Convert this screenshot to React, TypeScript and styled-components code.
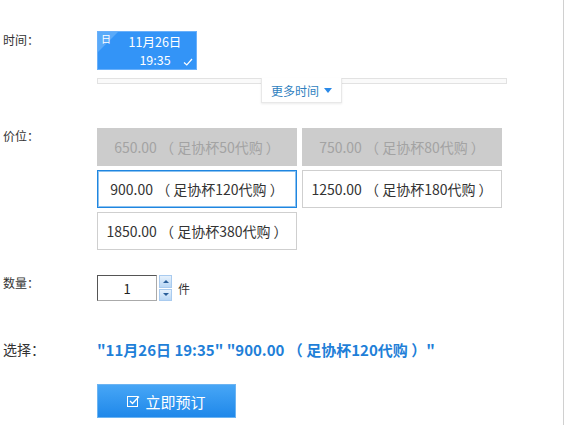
import React from "react";
import styled, { createGlobalStyle } from "styled-components";

const Global = createGlobalStyle`
  html, body { margin: 0; padding: 0; background: #fff; }
  body { font-family: "Noto Sans CJK SC", "Noto Sans", sans-serif; color: #333; }
`;

const Page = styled.div`
  width: 564px;
  height: 425px;
  border-right: 1px solid #d0d0d0;
  box-sizing: border-box;
  padding-top: 31px;
  display: flex;
  flex-direction: column;
`;

const Row = styled.div<{ $mt?: number }>`
  display: grid;
  grid-template-columns: 97px 1fr;
  margin-top: ${(p) => p.$mt ?? 0}px;
`;

const Label = styled.div<{ $size?: number; $top?: number }>`
  padding-left: 3px;
  font-size: ${(p) => p.$size ?? 12}px;
  line-height: 16px;
  padding-top: ${(p) => p.$top ?? 0}px;
  color: #333;
`;

const Col = styled.div`
  display: flex;
  flex-direction: column;
`;

const DateCard = styled.div`
  position: relative;
  width: 100px;
  height: 39px;
  background: #3394f7;
  border: 1px solid #6ab0fa;
  box-sizing: border-box;
  color: #fff;
  display: flex;
  flex-direction: column;
  align-items: center;
  justify-content: center;
  padding-left: 16px;
  font-size: 12.5px;
  line-height: 18px;
  overflow: hidden;
`;

const Corner = styled.div`
  position: absolute;
  left: 0;
  top: 0;
  width: 0;
  height: 0;
  border-top: 20px solid #5aaaf9;
  border-right: 20px solid transparent;
`;

const CornerText = styled.span`
  position: absolute;
  left: 3px;
  top: 1px;
  font-size: 10px;
  line-height: 12px;
`;

const Check = styled.svg`
  position: absolute;
  right: 3px;
  bottom: 3px;
`;

const MoreBar = styled.div`
  position: relative;
  width: 410px;
  height: 26px;
  margin-top: 8px;
`;

const Track = styled.div`
  height: 4px;
  border: 1px solid #e2e2e2;
  background: #fafafa;
`;

const MoreTab = styled.div`
  position: absolute;
  left: 164px;
  top: 0;
  width: 81px;
  height: 25px;
  background: #fff;
  border: 1px solid #e8e8e8;
  border-top: none;
  box-sizing: border-box;
  box-shadow: 0 1px 2px rgba(0, 0, 0, 0.08);
  font-size: 12px;
  color: #2f7fc0;
  display: flex;
  align-items: center;
  justify-content: center;
  gap: 5px;
`;

const Caret = styled.span`
  width: 0;
  height: 0;
  border-left: 4px solid transparent;
  border-right: 4px solid transparent;
  border-top: 5px solid #2b8ae8;
`;

const PriceGrid = styled.div`
  display: grid;
  grid-template-columns: 200px 200px;
  column-gap: 5px;
  row-gap: 4px;
`;

type Kind = "disabled" | "normal" | "selected";

const PriceBtn = styled.div<{ $kind: Kind }>`
  height: 38px;
  box-sizing: border-box;
  display: flex;
  align-items: center;
  justify-content: center;
  font-size: 14px;
  white-space: pre;
  background: ${(p) => (p.$kind === "disabled" ? "#cccccc" : "#fff")};
  color: ${(p) => (p.$kind === "disabled" ? "#a3a3a3" : "#333")};
  border: 1px solid
    ${(p) =>
      p.$kind === "disabled" ? "#cccccc" : p.$kind === "selected" ? "#1f86e0" : "#cfcfcf"};
  box-shadow: ${(p) => (p.$kind === "selected" ? "inset 0 0 0 1px #8cc2f0" : "none")};
`;

const QtyWrap = styled.div`
  display: flex;
  align-items: center;
  height: 26px;
`;

const QtyInput = styled.div`
  width: 60px;
  height: 26px;
  box-sizing: border-box;
  border: 1px solid #aaa;
  border-top-color: #555;
  border-left-color: #555;
  display: flex;
  align-items: center;
  justify-content: center;
  font-size: 13px;
  color: #222;
`;

const Spinner = styled.div`
  margin-left: 2px;
  width: 13px;
  height: 26px;
  display: flex;
  flex-direction: column;
  gap: 1px;
`;

const SpinBtn = styled.div<{ $up?: boolean }>`
  flex: 1;
  background: linear-gradient(#e6f1fc, #b9d7f5);
  border: 1px solid #a9cbef;
  box-sizing: border-box;
  display: flex;
  align-items: center;
  justify-content: center;
  &::after {
    content: "";
    width: 0;
    height: 0;
    border-left: 3px solid transparent;
    border-right: 3px solid transparent;
    ${(p) => (p.$up ? "border-bottom: 3px solid #2a5f9a;" : "border-top: 3px solid #2a5f9a;")}
  }
`;

const Unit = styled.span`
  margin-left: 6px;
  font-size: 12px;
  color: #333;
`;

const Chosen = styled.div`
  font-size: 15px;
  font-weight: bold;
  color: #1f7fd8;
  line-height: 18px;
  white-space: pre;
`;

const Submit = styled.button`
  width: 139px;
  height: 34px;
  border: 1px solid #6cb4f2;
  background: linear-gradient(#47a6f6, #1f88ea);
  color: #fff;
  font-family: "Noto Sans CJK SC", sans-serif;
  font-size: 15px;
  display: flex;
  align-items: center;
  justify-content: center;
  gap: 5px;
  padding: 0;
  cursor: pointer;
`;

export default function App() {
  return (
    <>
      <Global />
      <Page>
        <Row>
          <Label $top={1}>时间：</Label>
          <Col>
            <DateCard>
              <Corner />
              <CornerText>日</CornerText>
              <span>11月26日</span>
              <span>19:35</span>
              <Check width="10" height="8" viewBox="0 0 10 8">
                <path d="M1 4.5 L3.8 7 L9 1" stroke="#fff" strokeWidth="1.2" fill="none" />
              </Check>
            </DateCard>
            <MoreBar>
              <Track />
              <MoreTab>
                更多时间<Caret />
              </MoreTab>
            </MoreBar>
          </Col>
        </Row>
        <Row $mt={24}>
          <Label $top={0}>价位：</Label>
          <PriceGrid>
            <PriceBtn $kind="disabled">650.00 （ 足协杯50代购 ）</PriceBtn>
            <PriceBtn $kind="disabled">750.00 （ 足协杯80代购 ）</PriceBtn>
            <PriceBtn $kind="selected">900.00 （ 足协杯120代购 ）</PriceBtn>
            <PriceBtn $kind="normal">1250.00 （ 足协杯180代购 ）</PriceBtn>
            <PriceBtn $kind="normal">1850.00 （ 足协杯380代购 ）</PriceBtn>
          </PriceGrid>
        </Row>
        <Row $mt={25}>
          <Label $top={0}>数量：</Label>
          <QtyWrap>
            <QtyInput>1</QtyInput>
            <Spinner>
              <SpinBtn $up />
              <SpinBtn />
            </Spinner>
            <Unit>件</Unit>
          </QtyWrap>
        </Row>
        <Row $mt={40}>
          <Label $size={14} $top={0}>选择：</Label>
          <Chosen>"11月26日 19:35" "900.00 （ 足协杯120代购 ）"</Chosen>
        </Row>
        <Row $mt={25}>
          <div />
          <Submit>
            <svg width="13" height="12" viewBox="0 0 13 12">
              <rect x="0.5" y="1.5" width="10" height="10" fill="none" stroke="#fff" strokeWidth="1" />
              <path d="M3 6 L5.5 8.5 L12 1.5" stroke="#fff" strokeWidth="1.3" fill="none" />
            </svg>
            立即预订
          </Submit>
        </Row>
      </Page>
    </>
  );
}
